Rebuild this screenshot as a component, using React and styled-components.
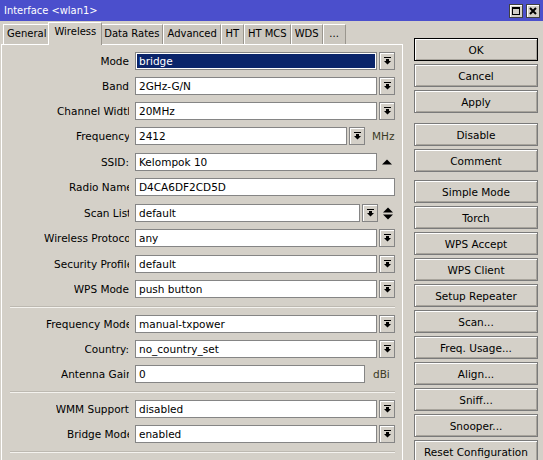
import React from 'react'
import styled, { createGlobalStyle } from 'styled-components'

const GlobalStyle = createGlobalStyle`
  html, body {
    margin: 0;
    padding: 0;
    background: #d4d0c8;
  }
  body {
    font-family: "DejaVu Sans", "Liberation Sans", sans-serif;
    font-size: 10.5px;
    color: #000;
  }
`

const Window = styled.div`
  width: 543px;
  height: 460px;
  overflow: hidden;
  background: #d4d0c8;
`

const TitleBar = styled.div`
  height: 21px;
  background: #4b4fcc;
  color: #fff;
  display: flex;
  align-items: center;
  justify-content: space-between;
  padding: 0 3px 0 4px;
  font-family: "DejaVu Sans Condensed", "DejaVu Sans", sans-serif;
  font-stretch: condensed;
  font-size: 11px;
`

const TitleButtons = styled.div`
  display: flex;
  gap: 3px;
`

const TitleButton = styled.div`
  width: 14px;
  height: 14px;
  box-sizing: border-box;
  background: #d4d0c8;
  border: 1px solid #404040;
  box-shadow: inset 1px 1px 0 #fff;
  display: flex;
  align-items: center;
  justify-content: center;
`

const Body = styled.div`
  display: flex;
  height: 439px;
`

const LeftCol = styled.div`
  width: 403px;
  display: flex;
  flex-direction: column;
  padding-left: 1px;
  box-sizing: border-box;
`

const Tabs = styled.div`
  display: flex;
  align-items: flex-end;
  height: 24px;
  padding-left: 2px;
  position: relative;
  z-index: 1;
`

const Tab = styled.div`
  height: ${p => (p.$active ? 23 : 20)}px;
  min-width: 23px;
  margin: ${p => (p.$active ? '0 -2px -1px -2px' : '0')};
  padding: ${p => (p.$active ? '3px 5px 0' : '3px 3px 0')};
  box-sizing: border-box;
  text-align: center;
  background: ${p => (p.$active ? '#d4d0c8' : '#cbc7bf')};
  border-top: 1px solid #fff;
  border-left: 1px solid #fff;
  border-right: 1px solid #9a968e;
  white-space: nowrap;
  position: relative;
  z-index: ${p => (p.$active ? 2 : 0)};
  font-size: 10px;
`

const Panel = styled.div`
  flex: 1;
  display: flex;
  flex-direction: column;
  border-top: 1px solid #fff;
  border-left: 1px solid #fff;
  border-right: 1px solid #fff;
  padding-top: 7px;
`

const Row = styled.div`
  display: flex;
  align-items: center;
  flex: none;
  height: 18px;
  margin-top: ${p => p.$extra || 0}px;
  margin-bottom: 7px;
`

const Label = styled.div`
  width: 127px;
  flex: none;
  text-align: right;
  white-space: nowrap;
  overflow: hidden;
  margin-right: 6px;
`

const LabelText = styled.span`
  display: inline-block;
  vertical-align: top;
  overflow: hidden;
  max-width: ${p => (p.$cut ? `${p.$cut}px` : 'none')};
`

const Input = styled.div`
  width: ${p => p.$w}px;
  height: 18px;
  flex: none;
  box-sizing: border-box;
  border: 1px solid #858585;
  background: #fff;
  display: flex;
  align-items: center;
  padding-left: 3px;
  white-space: nowrap;
  overflow: hidden;
  ${p => p.$selected && `
    background: #0a246a;
    color: #fff;
    box-shadow: inset 0 0 0 1px #fff;
  `}
`

const DropButton = styled.div`
  width: 16px;
  height: 18px;
  flex: none;
  margin-left: 2px;
  box-sizing: border-box;
  border: 1px solid #858585;
  background: #d4d0c8;
  box-shadow: inset 1px 1px 0 #fff;
  display: flex;
  align-items: center;
  justify-content: center;
`

const Unit = styled.span`
  margin-left: ${p => p.$gap}px;
  color: #3a3a26;
  white-space: nowrap;
`

const SideIcon = styled.div`
  margin-left: 5px;
  display: flex;
  align-items: center;
`

const Separator = styled.div`
  flex: none;
  margin: 1px 7px 7px 8px;
  border-top: 1px solid #bdb9b1;
  border-bottom: 1px solid #f4f2ee;
`

const RightCol = styled.div`
  width: 124px;
  margin-left: 11px;
  padding-top: 17px;
  display: flex;
  flex-direction: column;
`

const Button = styled.div`
  height: 23px;
  flex: none;
  box-sizing: border-box;
  margin-bottom: 3px;
  margin-top: ${p => p.$gap || 0}px;
  border: 1px solid ${p => (p.$default ? '#000' : '#7a7a7a')};
  box-shadow: inset 1px 1px 0 #fff, inset -1px -1px 0 #a8a49c;
  background: #d4d0c8;
  display: flex;
  align-items: center;
  justify-content: center;
  white-space: nowrap;
`

const DropIcon = () => (
  <svg width="7" height="8" viewBox="0 0 7 8">
    <rect x="0" y="0" width="7" height="1" fill="#000" />
    <path d="M2 2h3v2h2L3.5 7.5 0 4h2z" fill="#000" />
  </svg>
)

const UpIcon = () => (
  <svg width="10" height="6" viewBox="0 0 10 6">
    <path d="M0 5.5h10L5 0.5z" fill="#000" />
  </svg>
)

const UpDownIcon = () => (
  <svg width="10" height="13" viewBox="0 0 10 13">
    <path d="M0 5.5h10L5 0.5z" fill="#000" />
    <path d="M0 7.5h10L5 12.5z" fill="#000" />
  </svg>
)

const groups = [
  [
    { label: 'Mode', value: 'bridge', w: 242, drop: true, selected: true },
    { label: 'Band', value: '2GHz-G/N', w: 242, drop: true },
    { label: 'Channel Width', cut: 72, value: '20MHz', w: 242, drop: true },
    { label: 'Frequency', cut: 53, value: '2412', w: 212, drop: true, unit: 'MHz', unitGap: 7 },
    { label: 'SSID:', value: 'Kelompok 10', w: 242, side: 'up', extra: 1 },
    { label: 'Radio Name', cut: 60, value: 'D4CA6DF2CD5D', w: 260 },
    { label: 'Scan List', cut: 45, value: 'default', w: 225, drop: true, side: 'updown', extra: 1 },
    { label: 'Wireless Protocol', cut: 85, value: 'any', w: 242, drop: true },
    { label: 'Security Profile', cut: 75, value: 'default', w: 242, drop: true, extra: 1 },
    { label: 'WPS Mode', value: 'push button', w: 242, drop: true },
  ],
  [
    { label: 'Frequency Mode', cut: 83, value: 'manual-txpower', w: 242, drop: true },
    { label: 'Country:', value: 'no_country_set', w: 242, drop: true },
    { label: 'Antenna Gain', cut: 68, value: '0', w: 230, unit: 'dBi', unitGap: 8 },
  ],
  [
    { label: 'WMM Support', value: 'disabled', w: 242, drop: true },
    { label: 'Bridge Mode', cut: 62, value: 'enabled', w: 242, drop: true },
  ],
]

const tabs = ['General', 'Wireless', 'Data Rates', 'Advanced', 'HT', 'HT MCS', 'WDS', '...']

const buttons = [
  { text: 'OK', def: true },
  { text: 'Cancel' },
  { text: 'Apply' },
  { text: 'Disable', gap: 7 },
  { text: 'Comment' },
  { text: 'Simple Mode', gap: 5 },
  { text: 'Torch' },
  { text: 'WPS Accept' },
  { text: 'WPS Client' },
  { text: 'Setup Repeater' },
  { text: 'Scan...' },
  { text: 'Freq. Usage...' },
  { text: 'Align...' },
  { text: 'Sniff...' },
  { text: 'Snooper...' },
  { text: 'Reset Configuration' },
]

function Field({ row }) {
  return (
    <Row $extra={row.extra}>
      <Label>
        <LabelText $cut={row.cut}>{row.label}</LabelText>
      </Label>
      <Input $w={row.w} $selected={row.selected}>{row.value}</Input>
      {row.drop && (
        <DropButton>
          <DropIcon />
        </DropButton>
      )}
      {row.unit && <Unit $gap={row.unitGap}>{row.unit}</Unit>}
      {row.side === 'up' && (
        <SideIcon>
          <UpIcon />
        </SideIcon>
      )}
      {row.side === 'updown' && (
        <SideIcon>
          <UpDownIcon />
        </SideIcon>
      )}
    </Row>
  )
}

export default function App() {
  return (
    <Window>
      <GlobalStyle />
      <TitleBar>
        <span>Interface &lt;wlan1&gt;</span>
        <TitleButtons>
          <TitleButton>
            <svg width="8" height="8" viewBox="0 0 8 8">
              <rect x="0.5" y="0.5" width="7" height="7" fill="none" stroke="#000" />
              <rect x="0" y="0" width="8" height="2" fill="#000" />
            </svg>
          </TitleButton>
          <TitleButton>
            <svg width="8" height="8" viewBox="0 0 8 8">
              <path d="M1 1l6 6M7 1L1 7" stroke="#000" strokeWidth="2" />
            </svg>
          </TitleButton>
        </TitleButtons>
      </TitleBar>
      <Body>
        <LeftCol>
          <Tabs>
            {tabs.map(t => (
              <Tab key={t} $active={t === 'Wireless'}>{t}</Tab>
            ))}
          </Tabs>
          <Panel>
            {groups.map((g, i) => (
              <React.Fragment key={i}>
                {g.map(r => (
                  <Field key={r.label} row={r} />
                ))}
                <Separator />
              </React.Fragment>
            ))}
          </Panel>
        </LeftCol>
        <RightCol>
          {buttons.map(b => (
            <Button key={b.text} $default={b.def} $gap={b.gap}>{b.text}</Button>
          ))}
        </RightCol>
      </Body>
    </Window>
  )
}
